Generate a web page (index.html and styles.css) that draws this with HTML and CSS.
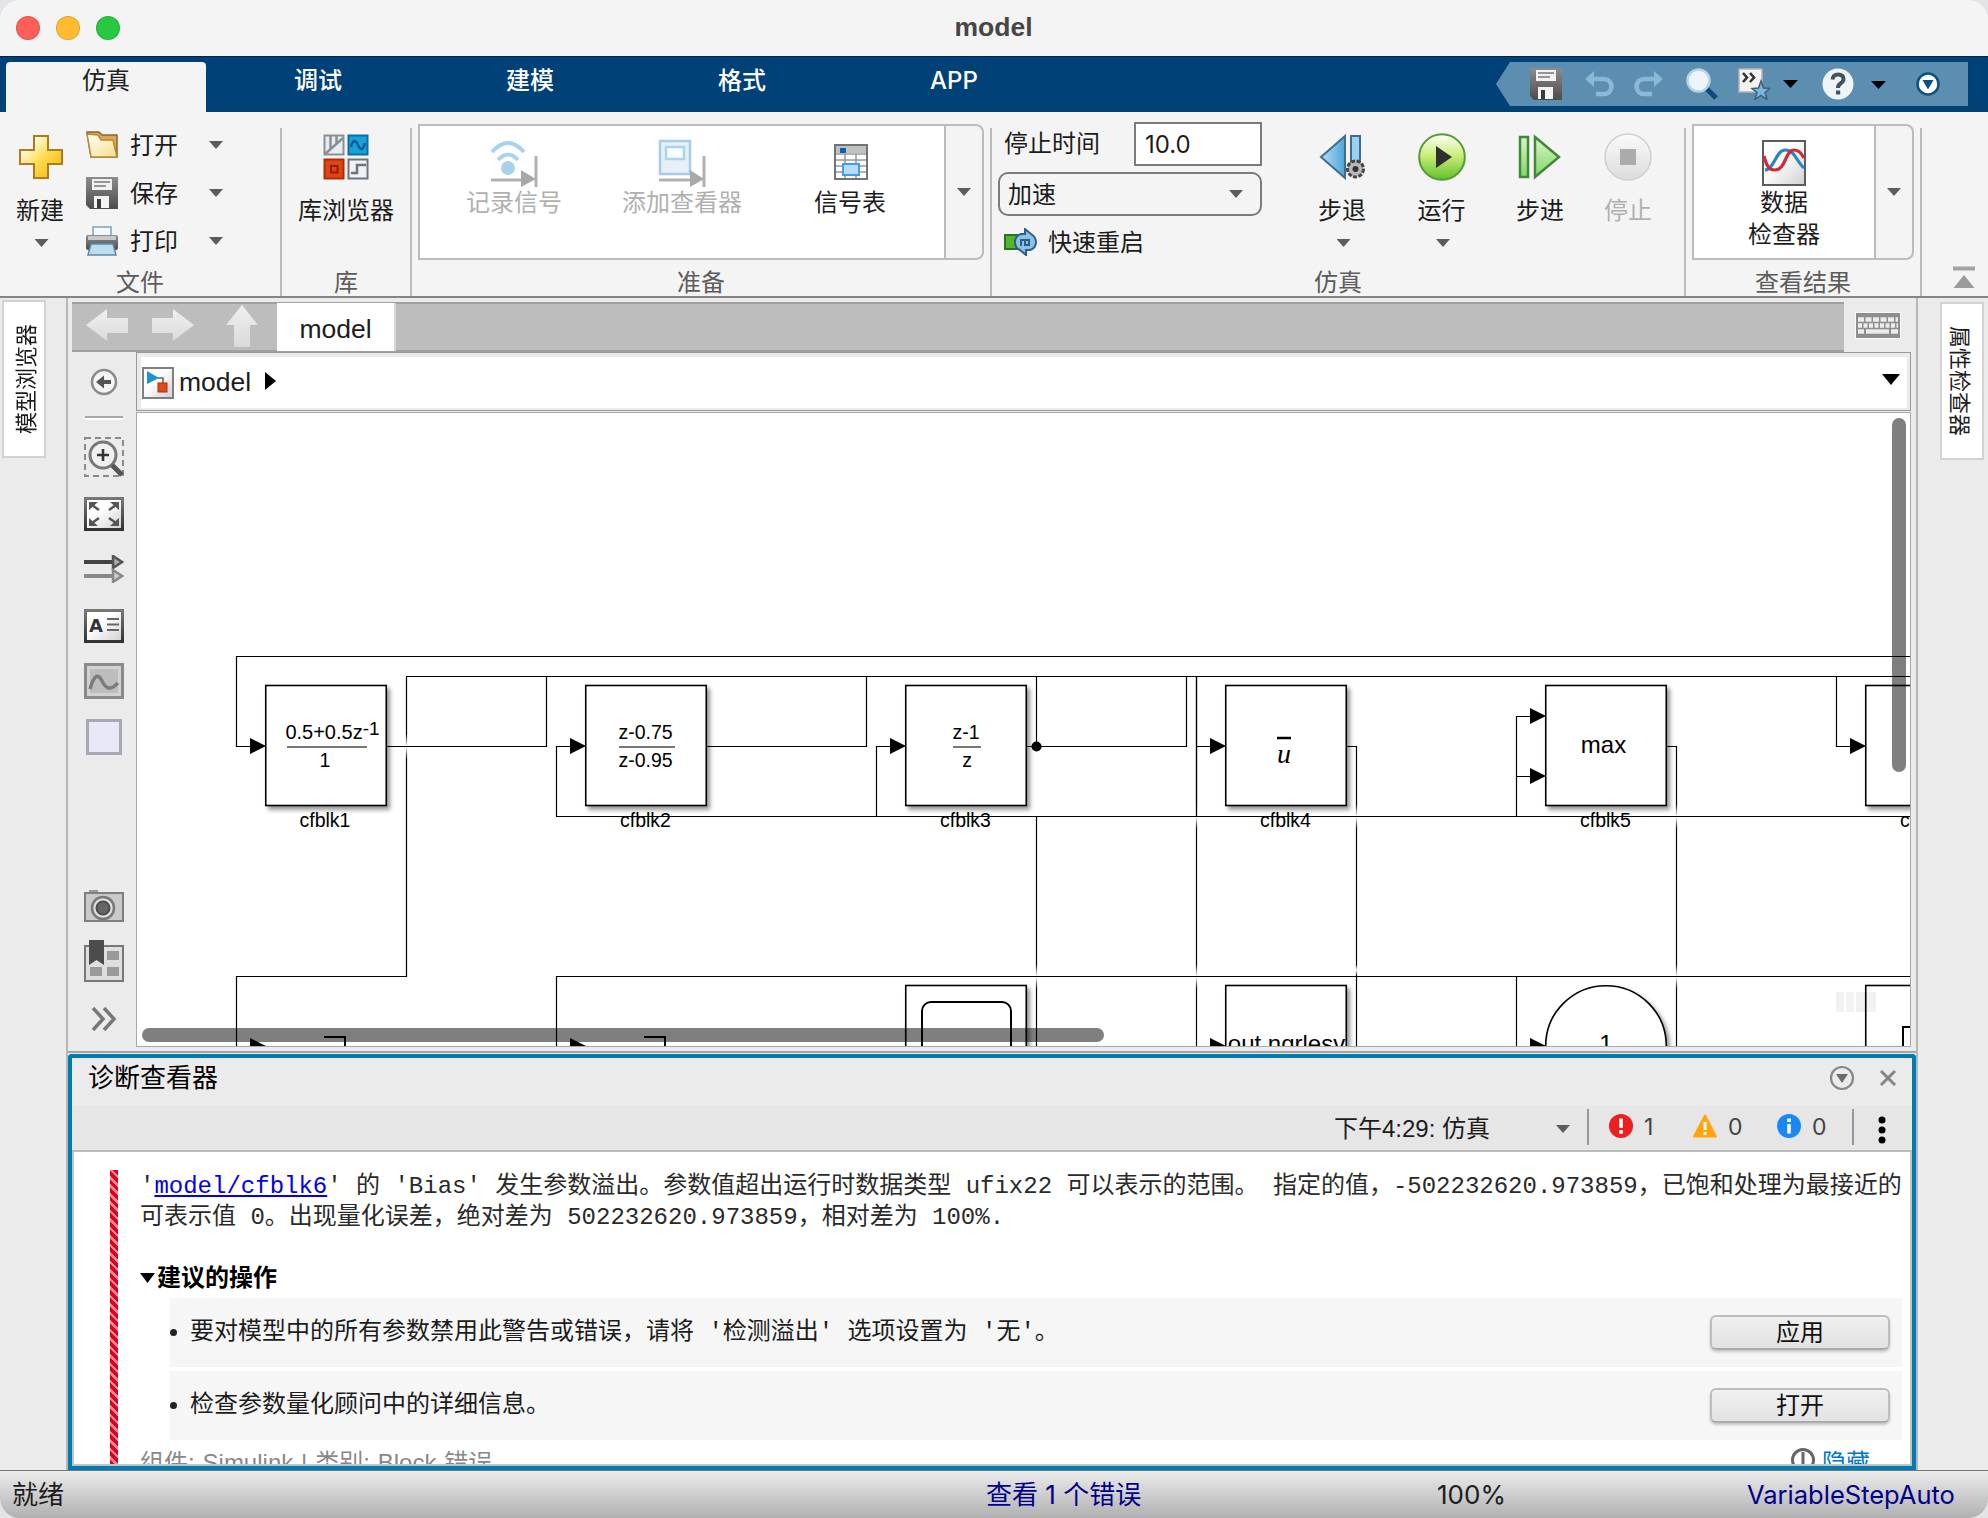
FILE: index.html
```html
<!DOCTYPE html>
<html lang="zh-CN">
<head>
<meta charset="utf-8">
<title>model</title>
<link rel="stylesheet" href="styles.css">
</head>
<body>
<svg class="defs" width="0" height="0" aria-hidden="true">
  <defs>
    <linearGradient id="gold" x1="0" y1="0" x2="1" y2="1"><stop offset=".2" stop-color="#fffbe0"/><stop offset=".55" stop-color="#ffd94a"/><stop offset="1" stop-color="#eeb000"/></linearGradient>
    <linearGradient id="cream" x1="0" y1="0" x2="1" y2="1"><stop offset="0" stop-color="#fffef4"/><stop offset="1" stop-color="#f7df8c"/></linearGradient>
    <linearGradient id="steel" x1="0" y1="0" x2="0" y2="1"><stop offset="0" stop-color="#8c8c8c"/><stop offset="1" stop-color="#4c4c4c"/></linearGradient>
    <linearGradient id="blue" x1="0" y1="0" x2="1" y2="0"><stop offset="0" stop-color="#b4e0f7"/><stop offset="1" stop-color="#4fa5d8"/></linearGradient>
    <linearGradient id="leaf" x1="0" y1="0" x2="0" y2="1"><stop offset="0" stop-color="#d9f5c9"/><stop offset="1" stop-color="#83d665"/></linearGradient>
    <linearGradient id="run" x1="0" y1="0" x2="0" y2="1"><stop offset="0" stop-color="#ffffff"/><stop offset=".45" stop-color="#cdee7c"/><stop offset="1" stop-color="#62bf2b"/></linearGradient>
    <linearGradient id="pale" x1="0" y1="0" x2="0" y2="1"><stop offset="0" stop-color="#fafafa"/><stop offset="1" stop-color="#dcdcdc"/></linearGradient>
    <linearGradient id="paper" x1="0" y1="0" x2="1" y2="1"><stop offset=".4" stop-color="#ffffff"/><stop offset="1" stop-color="#cfcfd2"/></linearGradient>
    <linearGradient id="frame" x1="0" y1="0" x2="0" y2="1"><stop offset="0" stop-color="#777"/><stop offset="1" stop-color="#333"/></linearGradient>
    <linearGradient id="nav" x1="0" y1="0" x2="0" y2="1"><stop offset="0" stop-color="#f0f0f0"/><stop offset="1" stop-color="#dadada"/></linearGradient>
    <symbol id="disk" viewBox="0 0 32 32">
      <path d="M0 0H32V32H4L0 28Z" fill="url(#steel)"/><rect x="6" y="2" width="20" height="11" fill="#f1f1f1"/>
      <path d="M8 5H24M8 9H20" stroke="#777" stroke-width="1.6"/><rect x="8" y="19" width="15" height="12" fill="#f4f4f4"/><rect x="11" y="22" width="4" height="9" fill="#3c3c3c"/>
    </symbol>
  </defs>
</svg>
<div class="window">
  <header class="titlebar">
    <div class="lights"><i class="light red"></i><i class="light amber"></i><i class="light green"></i></div>
    <h1>model</h1>
  </header>

  <nav class="tabs">
    <a class="tab active">仿真</a><a class="tab">调试</a><a class="tab">建模</a><a class="tab">格式</a><a class="tab">APP</a>
    <div class="quick">
      <svg class="q-save" width="32" height="32"><use href="#disk"/></svg>
      <svg class="q-undo" width="30" height="26" viewBox="0 0 30 26"><path d="M6 8H19A7.500 7.500 0 0 1 19 23H11" fill="none" stroke="#8ab8d6" stroke-width="4.500"/><path d="M0 8L9 0V16Z" fill="#8ab8d6"/></svg>
      <svg class="q-redo" width="30" height="26" viewBox="0 0 30 26"><path d="M24 8H11A7.500 7.500 0 0 0 11 23H19" fill="none" stroke="#8ab8d6" stroke-width="4.500"/><path d="M30 8L21 0V16Z" fill="#8ab8d6"/></svg>
      <svg class="q-find" width="32" height="32" viewBox="0 0 32 32"><path d="M20 20L30 30" stroke="#0c4a7c" stroke-width="5"/><circle cx="12.500" cy="12.500" r="11" fill="#eef5fa" stroke="#b4d3e8" stroke-width="2.500"/></svg>
      <svg class="q-fav" width="32" height="32" viewBox="0 0 32 32"><rect x="1" y="1" width="23" height="23" fill="#f2f2f2" stroke="#b9b2ac" stroke-width="1.500"/><path d="M5 5L9 9.500L5 14M12 5L16 9.500L12 14" fill="none" stroke="#333" stroke-width="2.600"/><path d="M23 13L25.500 20L32 20.500L27 24.500L29 31.500L23 27.500L17 31.500L19 24.500L14 20.500L20.500 20Z" fill="#7db5dc" stroke="#3a5f7f" stroke-width="1.500"/></svg>
      <i class="caret black q-c1"></i>
      <svg class="q-help" width="32" height="32" viewBox="0 0 32 32"><circle cx="16" cy="16" r="15.500" fill="#eff4f7"/><path d="M10.500 11.500Q11 6.500 16 6.500Q21.500 6.500 21.500 11Q21.500 13.500 18.500 15.500Q16 17 16 20" fill="none" stroke="#44525f" stroke-width="4"/><rect x="14" y="22.500" width="4.200" height="4" fill="#44525f"/></svg>
      <i class="caret black q-c2"></i>
      <svg class="q-more" width="24" height="24" viewBox="0 0 24 24"><circle cx="12" cy="12" r="10.500" fill="#fff" stroke="#0e5180" stroke-width="2.500"/><path d="M6.500 8H17.500L12 17.500Z" fill="#0e4f85"/></svg>
    </div>
  </nav>

  <div class="toolstrip">
    <section class="group file">
      <div class="content">
        <div class="big new">
          <span class="ico"><svg width="46" height="46" viewBox="0 0 46 46"><path d="M16 2H30V16H44V30H30V44H16V30H2V16H16Z" fill="url(#gold)" stroke="#b27a1c" stroke-width="2"/></svg></span>
          <span class="lbl">新建</span><i class="caret"></i>
        </div>
        <div class="rows">
          <div class="row"><svg width="32" height="28" viewBox="0 0 32 28"><path d="M1 1H13L16 4H31V26H5Z" fill="#d9a95c" stroke="#8f6524" stroke-width="1.500"/><path d="M1 3L12 4L15 9H27L31 26H5Z" fill="url(#cream)" stroke="#b88937" stroke-width="1.500"/></svg><span>打开</span><i class="caret"></i></div>
          <div class="row"><svg width="32" height="32"><use href="#disk"/></svg><span>保存</span><i class="caret"></i></div>
          <div class="row"><svg width="32" height="30" viewBox="0 0 32 30"><rect x="7" y="1" width="18" height="12" fill="#f3f9fd" stroke="#7fa3bd" stroke-width="1.500"/><rect x="0" y="9" width="32" height="15" rx="2" fill="url(#steel)"/><rect x="2" y="10" width="28" height="4" fill="#c9c9c9"/><path d="M5 18H27L30 29H2Z" fill="#bcdcf0" stroke="#5a89aa" stroke-width="1.500"/></svg><span>打印</span><i class="caret"></i></div>
        </div>
      </div>
      <h2>文件</h2>
    </section>
    <i class="sep"></i>
    <section class="group lib">
      <div class="content">
        <div class="big">
          <span class="ico"><svg width="46" height="46" viewBox="0 0 46 46"><rect x="1.500" y="1.500" width="19" height="19" fill="#e8edf0" stroke="#8a8f93" stroke-width="2"/><path d="M7.500 2V14M13.500 2V9M2 20L20 4" stroke="#8a8f93" stroke-width="2.500"/><rect x="25.500" y="1.500" width="19" height="19" fill="#18a0dc" stroke="#0c6fa6" stroke-width="2"/><path d="M28 13Q31 2 35 11T42 9" fill="none" stroke="#0a5c94" stroke-width="2.500"/><rect x="1.500" y="25.500" width="19" height="19" fill="#e24312" stroke="#b02c08" stroke-width="2"/><rect x="8" y="32" width="6.500" height="6.500" fill="none" stroke="#8e2206" stroke-width="2"/><rect x="25.500" y="25.500" width="19" height="19" fill="#eef3f6" stroke="#6f7478" stroke-width="2"/><path d="M28 39H34V31H43" fill="none" stroke="#6f7478" stroke-width="2.500"/></svg></span>
          <span class="lbl">库浏览器</span>
        </div>
      </div>
      <h2>库</h2>
    </section>
    <i class="sep"></i>
    <section class="group prep">
      <div class="content">
        <div class="gallery">
          <div class="items">
            <div class="item off"><span class="ico"><svg width="48" height="48" viewBox="0 0 48 48"><path d="M2 13Q18 -5 34 13M8 21Q18 10 28 21" fill="none" stroke="#a9d2ec" stroke-width="4"/><circle cx="18" cy="29" r="7" fill="#a9d2ec"/><path d="M1 41H32M46 17V48" stroke="#b0b0b0" stroke-width="3"/><path d="M31 31L46 40L31 48Z" fill="#a8a8a8"/></svg></span><span class="lbl">记录信号</span></div>
            <div class="item off"><span class="ico"><svg width="48" height="48" viewBox="0 0 48 48"><rect x="2" y="2" width="30" height="33" fill="#e7f0f8" stroke="#a9cbe5" stroke-width="2.500"/><rect x="8" y="8" width="18" height="12" fill="#f8fcff" stroke="#a9d6ef" stroke-width="2.500"/><path d="M1 41H32M46 17V48" stroke="#b0b0b0" stroke-width="3"/><path d="M32 31L46 40L32 48Z" fill="#a8a8a8"/></svg></span><span class="lbl">添加查看器</span></div>
            <div class="item"><span class="ico"><svg class="table" width="34" height="36" viewBox="0 0 34 36"><rect x="1" y="1" width="32" height="34" fill="#fff" stroke="#737373" stroke-width="2"/><rect x="2" y="2" width="30" height="7" fill="#c2c2c2"/><path d="M2 10H32M2 16H32M2 22H32M2 28H32M11 10V34M22 10V34" stroke="#999" stroke-width="1.600"/><rect x="6" y="4" width="6" height="5" fill="#0a62ae"/><rect x="9" y="20" width="16" height="11" fill="#b8ddfa" stroke="#3d9fee" stroke-width="2"/></svg></span><span class="lbl">信号表</span></div>
          </div>
          <div class="drop"><i class="caret"></i></div>
        </div>
      </div>
      <h2>准备</h2>
    </section>
    <i class="sep"></i>
    <section class="group sim">
      <div class="content">
        <div class="params">
          <div class="param"><span class="name">停止时间</span><span class="field">10.0</span></div>
          <div class="select"><span>加速</span><i class="caret"></i></div>
          <div class="restart"><svg width="33" height="28" viewBox="0 0 33 28"><rect x="1" y="7" width="12" height="14" fill="#57b52c" stroke="#2b7224" stroke-width="2"/><path d="M17 6H21V1L27 6Q32 9 32 14Q32 20 26 22H22V27L16 22Q11 20 11 14Q11 8 17 6Z" fill="#8cc3e4" stroke="#2c6088" stroke-width="2"/><path d="M17 18V12H25V17H21V12" fill="none" stroke="#2c6088" stroke-width="2"/></svg><span>快速重启</span></div>
        </div>
        <div class="big w100"><span class="ico"><svg width="46" height="46" viewBox="0 0 46 46"><path d="M26 2V44L2 23Z" fill="url(#blue)" stroke="#3f6d8d" stroke-width="2"/><rect x="32" y="2" width="9" height="36" fill="#9bd2f2" stroke="#3f6d8d" stroke-width="2"/><circle cx="36.500" cy="35" r="8" fill="#b8b8b8" stroke="#444" stroke-width="3" stroke-dasharray="4 1.500"/><circle cx="36.500" cy="35" r="3" fill="#333"/></svg></span><span class="lbl">步退</span><i class="caret"></i></div>
        <div class="big w99"><span class="ico"><svg width="48" height="48" viewBox="0 0 48 48"><circle cx="24" cy="24" r="22.800" fill="url(#run)" stroke="#4f9f30" stroke-width="2"/><path d="M18 13V35L34 24Z" fill="#2f2f2f"/></svg></span><span class="lbl">运行</span><i class="caret"></i></div>
        <div class="big w98"><span class="ico"><svg class="fwd" width="44" height="46" viewBox="0 0 44 46"><rect x="3" y="3" width="8" height="40" fill="url(#leaf)" stroke="#43883a" stroke-width="2.500"/><path d="M18 3V43L42 23Z" fill="url(#leaf)" stroke="#43883a" stroke-width="2.500"/></svg></span><span class="lbl">步进</span></div>
        <div class="big w78 off"><span class="ico"><svg width="48" height="48" viewBox="0 0 48 48"><circle cx="24" cy="24" r="23" fill="url(#pale)" stroke="#cfcfcf" stroke-width="1.500"/><rect x="16" y="16" width="16" height="16" fill="#ababab"/></svg></span><span class="lbl">停止</span></div>
      </div>
      <h2>仿真</h2>
    </section>
    <i class="sep"></i>
    <section class="group results">
      <div class="content">
        <div class="gallery">
          <div class="items">
            <div class="item"><span class="ico"><svg width="44" height="46" viewBox="0 0 44 46"><rect x="1" y="1" width="42" height="44" fill="url(#paper)" stroke="#5c5c5c" stroke-width="2"/><path d="M3 30C12 30 14 10 23 10C33 10 34 21 42 28" fill="none" stroke="#2c85c4" stroke-width="3.200"/><path d="M2 16C5 27 7 30 13 30C24 30 23 10 32 10C37 10 39 13 42 18" fill="none" stroke="#d22a31" stroke-width="3.200"/></svg></span><span class="lbl two">数据<br>检查器</span></div>
          </div>
          <div class="drop"><i class="caret"></i></div>
        </div>
      </div>
      <h2>查看结果</h2>
    </section>
    <i class="sep"></i>
    <svg class="collapse" width="22" height="24" viewBox="0 0 22 24"><path d="M0 2.500H22" stroke="#a3a3a3" stroke-width="4"/><path d="M11 9L21.500 22H.5Z" fill="#9b9b9b"/></svg>
  </div>

  <main class="main">
    <aside class="side left"><span class="vtab">模型浏览器</span></aside>
    <div class="center">
      <div class="docbar">
        <div class="doctabs">
          <svg class="nav-l" width="42" height="32" viewBox="0 0 42 32"><path d="M0 16L21 0V9H42V24H21V32Z" fill="url(#nav)"/></svg>
          <svg class="nav-r" width="42" height="32" viewBox="0 0 42 32"><path d="M42 16L21 0V9H0V24H21V32Z" fill="url(#nav)"/></svg>
          <svg class="nav-u" width="34" height="42" viewBox="0 0 34 42"><path d="M17 0L33 20H25V42H9V20H1Z" fill="url(#nav)"/></svg>
          <span class="doctab">model</span>
        </div>
        <svg class="keys" width="46" height="27" viewBox="0 0 46 27"><rect x="0" y="0" width="46" height="27" fill="#fafafa"/><rect x="1" y="1" width="44" height="25" fill="#8e8e8e"/><g stroke="#ececec" stroke-width="4.500"><path d="M3 7.500H43" stroke-dasharray="6 1.500"/><path d="M3 13.500H43" stroke-dasharray="4 1.500"/><path d="M3 19.500H9M11 19.500H34M36 19.500H43"/></g></svg>
      </div>
      <div class="work">
        <div class="palette">
          <svg class="p1" width="28" height="28" viewBox="0 0 28 28"><circle cx="14" cy="14" r="12" fill="#f4f4f4" stroke="#8a8a8a" stroke-width="2.500"/><path d="M6 14L14 7.500V12H21V16H14V20.500Z" fill="#555"/></svg>
          <i class="rule"></i>
          <svg class="p2" width="40" height="40" viewBox="0 0 40 40"><rect x="1" y="1" width="38" height="38" fill="none" stroke="#8a8a8a" stroke-width="2" stroke-dasharray="6 4"/><circle cx="19" cy="18" r="13" fill="#f0f0f0" stroke="#777" stroke-width="3"/><path d="M19 12V24M13 18H25" stroke="#333" stroke-width="2.600"/><path d="M28 28L38 38" stroke="#555" stroke-width="5"/></svg>
          <svg class="p3" width="40" height="34" viewBox="0 0 40 34"><rect x="1.500" y="1.500" width="37" height="31" fill="url(#paper)" stroke="url(#frame)" stroke-width="3"/><g fill="#555" stroke="#555" stroke-width="2.500"><path d="M15 13L8 8M25 13L32 8M15 21L8 26M25 21L32 26"/><path stroke="none" d="M5 5H14L5 13ZM35 5H26L35 13ZM5 29H14L5 21ZM35 29H26L35 21Z"/></g></svg>
          <svg class="p4" width="40" height="28" viewBox="0 0 40 28"><path d="M0 7H30" stroke="#444" stroke-width="4"/><path d="M0 21H30" stroke="#888" stroke-width="4"/><path d="M29 1L38 7L29 13Z" fill="#aaa" stroke="#555" stroke-width="2.500"/><path d="M29 15L38 21L29 27Z" fill="#ccc" stroke="#888" stroke-width="2.500"/></svg>
          <svg class="p5" width="40" height="34" viewBox="0 0 40 34"><rect x="1.500" y="1.500" width="37" height="31" fill="url(#paper)" stroke="url(#frame)" stroke-width="3"/><text x="5" y="22.500" class="glyph">A</text><path d="M23 10H35M23 15.500H35M23 21H35" stroke="#666" stroke-width="2"/></svg>
          <svg class="p6" width="40" height="36" viewBox="0 0 40 36"><rect x="1.500" y="1.500" width="37" height="33" fill="#d2d2d2" stroke="#8a8a8a" stroke-width="3"/><rect x="6" y="6" width="28" height="24" fill="#bdbdbd"/><path d="M6 26C10 12 14 10 18 18S26 28 34 20" fill="none" stroke="#7b7b7b" stroke-width="3.500"/></svg>
          <svg class="p7" width="36" height="36" viewBox="0 0 36 36"><rect x="1.500" y="1.500" width="33" height="33" fill="#e8e8f8" stroke="#a9a9b3" stroke-width="3"/></svg>
          <svg class="p8" width="40" height="32" viewBox="0 0 40 32"><rect x="5" y="0" width="9" height="5" fill="#999"/><rect x="1" y="3" width="38" height="28" fill="#c9c9c9" stroke="#7e7e7e" stroke-width="2"/><circle cx="19" cy="18" r="11" fill="#dedede" stroke="#777" stroke-width="2.500"/><circle cx="19" cy="18" r="6.500" fill="#666" stroke="#4c4c4c" stroke-width="2"/></svg>
          <svg class="p9" width="40" height="42" viewBox="0 0 40 42"><rect x="1" y="6" width="38" height="35" fill="#dedede" stroke="#777" stroke-width="2"/><path d="M23 11H35V20H23ZM23 27H35V36H23ZM6 27H18V36H6Z" fill="#999"/><path d="M5 0H20V25L12.500 20L5 25Z" fill="#4c4c4c"/></svg>
          <svg class="p10" width="26" height="24" viewBox="0 0 26 24"><path d="M2 1L12 12L2 23M13 1L23 12L13 23" fill="none" stroke="#777" stroke-width="3.500"/></svg>
        </div>
        <div class="editor">
          <div class="crumbs">
            <svg width="32" height="32" viewBox="0 0 32 32"><rect x="1" y="1" width="30" height="30" fill="url(#paper)" stroke="#7f7f7f" stroke-width="2"/><path d="M5 4V17L17 11Z" fill="#1a94d2"/><path d="M16 11H21V16" fill="none" stroke="#666" stroke-width="1.600"/><rect x="16" y="16" width="9" height="9" fill="#df4a16" stroke="#a92f08" stroke-width="1"/></svg>
            <span>model</span>
            <svg class="next" width="11" height="18" viewBox="0 0 11 18"><path d="M0 0L11 9L0 18Z"/></svg>
            <i class="caret black wide"></i>
          </div>
          <div class="canvas">
            <svg width="1773" height="633" viewBox="137 413 1773 633">
              <defs>
                <filter id="sh" x="-10%" y="-10%" width="130%" height="130%"><feDropShadow dx="3" dy="3.500" stdDeviation="2" flood-opacity=".42"/></filter>
                <linearGradient id="gap" x1="0" y1="0" x2="0" y2="1"><stop offset="0" stop-color="#fff" stop-opacity="0"/><stop offset=".5" stop-color="#fff"/><stop offset="1" stop-color="#fff" stop-opacity="0"/></linearGradient>
              </defs>
              <g class="wire">
                <path d="M406.500 676V976.500H236.500V1050"/>
                <path d="M1036.500 676V746M1036.500 816V1050M1196.500 676V1050M1346 746.500H1356.500V1050M1666 746.500H1676.500V1050"/>
              </g>
              <g fill="url(#gap)">
                <rect x="404" y="734" width="5" height="25"/>
                <rect x="1034" y="964" width="5" height="25"/><rect x="1194" y="804" width="5" height="25"/><rect x="1194" y="964" width="5" height="25"/>
                <rect x="1354" y="804" width="5" height="25"/><rect x="1354" y="964" width="5" height="12"/>
                <rect x="1674" y="804" width="5" height="25"/><rect x="1674" y="964" width="5" height="25"/>
              </g>
              <g class="wire">
                <path d="M1910 656.500H236.500V746.500H252M1910 676.500H406"/>
                <path d="M387 746.500H546.500V676M706 746.500H866.500V676M1026 746.500H1186.500V676"/>
                <path d="M572 746.500H556.500V816.500H1910M892 746.500H876.500V816M1196 746.500H1212M1196.500 676V816"/>
                <path d="M1532 716.500H1516.500V816M1516 776.500H1532M1836.500 676V746.500H1852"/>
                <path d="M1910 976.500H556.500V1050M1516.500 976V1050"/>
              </g>
              <circle cx="1036.500" cy="746.500" r="5"/>
              <g class="block" filter="url(#sh)">
                <rect x="265.750" y="685.500" width="120.500" height="120"/><rect x="585.750" y="685.500" width="120.500" height="120"/><rect x="905.750" y="685.500" width="120.500" height="120"/><rect x="1225.750" y="685.500" width="120.500" height="120"/><rect x="1545.750" y="685.500" width="120.500" height="120"/><rect x="1865.750" y="685.500" width="120.500" height="120"/>
                <rect x="905.750" y="985.500" width="120.500" height="120"/><rect x="1225.750" y="985.500" width="120.500" height="120"/><circle cx="1606" cy="1046" r="60.300"/><rect x="1865.750" y="985.500" width="120.500" height="120"/>
              </g>
              <path d="M250 738V754L266 746ZM570 738V754L586 746ZM890 738V754L906 746ZM1210 738V754L1226 746ZM1530 708V724L1546 716ZM1530 768V784L1546 776ZM1850 738V754L1866 746ZM250 1038V1054L266 1046ZM570 1038V1054L586 1046ZM1210 1038V1054L1226 1046ZM1530 1038V1054L1546 1046Z"/>
              <g fill="none" stroke="#000" stroke-width="2">
                <path d="M324 1037H345V1060M644 1037H665V1060M1903 1060V1027H1915"/><rect x="922" y="1002" width="89" height="80" rx="9"/>
              </g>
              <path d="M287 747H367M619 747H675M953 747H981" stroke="#777" stroke-width="2"/>
              <path d="M1277 738H1291" stroke="#000" stroke-width="2.500"/>
              <g class="t">
                <text x="332.500" y="739" font-size="20"><tspan>0.5+0.5z</tspan><tspan font-size="19" dy="-4">-1</tspan></text><text x="325" y="767">1</text>
                <text x="645.500" y="739">z-0.75</text><text x="645.500" y="767">z-0.95</text>
                <text x="966" y="739">z-1</text><text x="967" y="767">z</text>
                <text x="1284" y="763" class="u">u</text><text x="1603.500" y="753" font-size="24">max</text>
                <text x="325" y="827">cfblk1</text><text x="645.500" y="827">cfblk2</text><text x="965.500" y="827">cfblk3</text><text x="1285.500" y="827">cfblk4</text><text x="1605.500" y="827">cfblk5</text><text x="1925.500" y="827">cfblk6</text>
                <text x="1286.500" y="1052" font-size="24">out.nqrlesv</text><text x="1606" y="1052" font-size="24">1</text>
              </g>
              <path d="M1836 992H1844V1012H1836ZM1846 992H1854V1012H1846ZM1856 992H1876V1012H1856Z" fill="#000" opacity=".05"/>
              <rect x="1892" y="418" width="14" height="354" rx="7" fill="#000" opacity=".5"/>
              <rect x="142" y="1028" width="962" height="14" rx="7" fill="#000" opacity=".5"/>
            </svg>
          </div>
        </div>
      </div>
      <section class="diag">
        <div class="diag-title"><span>诊断查看器</span>
          <svg width="26" height="26" viewBox="0 0 26 26"><circle cx="13" cy="13" r="11" fill="none" stroke="#868686" stroke-width="2.200"/><path d="M7 9H19L13 18Z" fill="#6a6a6a"/></svg>
          <svg class="x" width="18" height="18" viewBox="0 0 18 18"><path d="M2 2L16 16M16 2L2 16" stroke="#858585" stroke-width="3"/></svg>
        </div>
        <div class="diag-bar">
          <span class="when">下午4:29: 仿真</span><i class="caret"></i><i class="bar"></i>
          <svg width="24" height="24" viewBox="0 0 24 24"><circle cx="12" cy="12" r="12" fill="#ee1f1f"/><path d="M12 4.500V14" stroke="#fff" stroke-width="3.600"/><rect x="10.200" y="16" width="3.600" height="3.600" fill="#fff"/></svg><b>1</b>
          <svg class="warn" width="24" height="24" viewBox="0 0 24 24"><path d="M12 1.500L23 22.500H1Z" fill="#ffa60f" stroke="#ffa60f" stroke-width="2" stroke-linejoin="round"/><path d="M12 8V16" stroke="#fff" stroke-width="3"/><rect x="10.500" y="18" width="3" height="3" fill="#fff"/></svg><b>0</b>
          <svg class="info" width="24" height="24" viewBox="0 0 24 24"><circle cx="12" cy="12" r="12" fill="#1987f5"/><rect x="10.200" y="4.500" width="3.600" height="3.600" fill="#fff"/><path d="M12 10V19.500" stroke="#fff" stroke-width="3.600"/></svg><b>0</b>
          <i class="bar b2"></i>
          <svg class="dots" width="8" height="28" viewBox="0 0 8 28"><circle cx="4" cy="4" r="3.500"/><circle cx="4" cy="14" r="3.500"/><circle cx="4" cy="24" r="3.500"/></svg>
        </div>
        <div class="diag-body">
          <i class="stripe"></i>
          <div class="msg">
            <p class="text">'<a>model/cfblk6</a>' 的 'Bias' 发生参数溢出。参数值超出运行时数据类型 ufix22 可以表示的范围。 指定的值，-502232620.973859，已饱和处理为最接近的<br>可表示值 0。出现量化误差，绝对差为 502232620.973859，相对差为 100%.</p>
            <h3><svg width="15" height="10" viewBox="0 0 15 10"><path d="M0 0H15L7.500 10Z"/></svg>建议的操作</h3>
            <div class="act"><i class="dot"></i><span>要对模型中的所有参数禁用此警告或错误，请将 '检测溢出' 选项设置为 '无'。</span><button>应用</button></div>
            <div class="act"><i class="dot"></i><span>检查参数量化顾问中的详细信息。</span><button>打开</button></div>
            <div class="foot"><span>组件: Simulink | 类别: Block 错误</span><svg width="24" height="24" viewBox="0 0 24 24"><circle cx="12" cy="12" r="10.500" fill="#fff" stroke="#666" stroke-width="3"/><path d="M12 4V20" stroke="#666" stroke-width="3"/></svg><a>隐藏</a></div>
          </div>
        </div>
      </section>
    </div>
    <aside class="side right"><span class="vtab">属性检查器</span></aside>
  </main>

  <footer class="status"><span class="s1">就绪</span><span class="s2">查看 1 个错误</span><span class="s3">100%</span><span class="s4">VariableStepAuto</span></footer>
</div>
</body>
</html>
```
FILE: styles.css
```css
* { box-sizing: border-box; }
body { margin: 0; background: #e4e4e8; font-family: Inter, "Noto Sans CJK SC", sans-serif; font-size: 24px; color: #1c1c1c; }
h1, h2, h3, p { margin: 0; font-weight: 400; }
i { display: block; flex: none; }
svg { display: block; flex: none; }
.defs { position: absolute; }
.window { width: 1988px; height: 1518px; display: flex; flex-direction: column; overflow: hidden; border-radius: 20px; background: #ebebeb; }

.titlebar { height: 57px; display: flex; align-items: center; background: #f4f4f4; border-bottom: 1px solid #0a1f4d; }
.lights { width: 300px; padding-left: 16px; display: flex; gap: 16px; }
.light { width: 24px; height: 24px; border-radius: 50%; border: 1px solid rgba(0,0,0,.12); }
.red { background: #ff5f57; }
.amber { background: #febc2e; }
.green { background: #28c840; }
.titlebar h1 { flex: 1; padding: 0 301px 2px 0; text-align: center; font: 700 26.500px/52px "Liberation Sans", Arial, sans-serif; color: #464646; }

.tabs { height: 55px; padding: 5px 0 0 6px; display: flex; gap: 12px; background: #004178; }
.tab { width: 200px; height: 50px; line-height: 38px; text-align: center; color: #fff; font-weight: 500; }
.tab.active { background: #f4f4f4; color: #222; border-radius: 4px 4px 0 0; font-weight: 400; }
.quick { width: 472px; height: 44px; margin-left: 430px; padding-left: 34px; display: flex; align-items: center; background: #5b8eb1; clip-path: polygon(14px 0, 100% 0, 100% 100%, 14px 100%, 0 50%); }
.q-undo { margin-left: 23px; }
.q-redo { margin-left: 18px; }
.q-find { margin-left: 23px; }
.q-fav { margin-left: 20px; }
.q-c1 { margin-left: 13px; }
.q-help { margin-left: 24px; }
.q-c2 { margin: 2px 0 0 17px; }
.q-more { margin-left: 30px; }

.caret { width: 14px; height: 8px; background: #5c5c5c; clip-path: polygon(0 0, 100% 0, 50% 100%); }
.caret.black { width: 15px; background: #000; }
.caret.wide { width: 18px; height: 11px; }

.toolstrip { height: 186px; display: flex; background: #f4f4f4; border-bottom: 2px solid #858585; }
.sep { width: 2px; height: 168px; margin-top: 16px; background: #bcbcbc; }
.group { flex: none; }
.content { height: 154px; display: flex; align-items: flex-start; }
.group h2 { height: 30px; line-height: 33px; text-align: center; font-size: 24px; color: #5c5c5c; }
.file { width: 280px; }
.lib { width: 128px; }
.prep { width: 578px; }
.sim { width: 692px; }
.results { width: 234px; }
.big { width: 128px; padding-top: 21px; display: flex; flex-direction: column; align-items: center; }
.ico { height: 48px; display: flex; align-items: center; }
.big .lbl { margin-top: 15px; line-height: 30px; }
.big .caret { margin: 13px 0 0 3px; }
.new { width: 80px; }
.new .ico { margin-left: 2px; }
.table { margin: -2px 0 0 2px; }
.fwd { margin-left: -3px; }
.off .lbl { color: #b0b0b0; }
.w100 { width: 100px; margin-left: 30px; }
.w99 { width: 99px; }
.w98 { width: 98px; }
.w78 { width: 78px; }
.rows { padding: 9px 0 0 6px; }
.row { height: 48px; display: flex; align-items: center; gap: 12px; }
.row span { margin-top: -4px; }
.row .caret { margin-left: 19px; }
.gallery { flex: 1; height: 136px; margin: 12px 6px 0; display: flex; border: 2px solid #bcbcbc; border-radius: 0 8px 8px 0; }
.items { flex: 1; padding: 0 10px; display: flex; background: #fff; }
.item { flex: 1; padding-top: 13px; display: flex; flex-direction: column; align-items: center; }
.item .lbl { white-space: nowrap; line-height: 32px; }
.item .two { text-align: center; }
.drop { width: 38px; display: flex; align-items: center; justify-content: center; border-left: 2px solid #bcbcbc; }
.params { width: 270px; padding: 10px 0 0 6px; }
.param { height: 44px; display: flex; }
.name { width: 136px; padding-left: 6px; line-height: 43px; }
.field { flex: 1; padding-left: 9px; border: 2px solid #7b7b7b; background: #fff; line-height: 42px; }
.select { height: 44px; margin-top: 6px; padding: 0 17px 0 8px; display: flex; justify-content: space-between; align-items: center; border: 2px solid #7b7b7b; border-radius: 10px; }
.select span { margin-top: -3px; }
.restart { height: 40px; margin-top: 6px; padding-left: 6px; display: flex; align-items: center; gap: 11px; }
.restart span { margin-top: -4px; }
.collapse { align-self: flex-end; margin: 0 0 6px 31px; }

.main { height: 1172px; display: flex; }
.side { flex: none; }
.left { width: 68px; padding: 2px 0 0 2px; border-right: 2px solid #b8b8b8; }
.right { width: 72px; padding: 4px 0 0 22px; border-left: 2px solid #b8b8b8; }
.vtab { width: 44px; height: 158px; display: flex; align-items: center; justify-content: center; writing-mode: vertical-rl; text-orientation: sideways; background: #fff; border: 2px solid #d2d2d2; font-size: 22px; }
.left .vtab { transform: rotate(180deg); }
.center { width: 1848px; display: flex; flex-direction: column; }

.docbar { height: 54px; padding: 4px 0 0 4px; display: flex; }
.doctabs { width: 1772px; height: 50px; padding-left: 14px; display: flex; align-items: flex-start; background: #bdbdbd; border-top: 2px solid #a0a0a0; border-bottom: 2px solid #a0a0a0; }
.nav-l { margin-top: 5px; }
.nav-r { margin: 5px 0 0 24px; }
.nav-u { margin: 1px 0 0 31px; }
.doctab { width: 119px; height: 48px; margin: -1px 0 0 18px; text-align: center; background: #fff; border-right: 2px solid #d8d8d8; font: 26.500px/52px "Liberation Sans", sans-serif; }
.keys { margin: 10px 0 0 11px; }

.work { height: 699px; display: flex; }
.palette { width: 68px; padding-left: 4px; display: flex; flex-direction: column; align-items: center; }
.p1 { margin-top: 16px; }
.rule { width: 38px; height: 4px; margin-top: 20px; background: #a9a9a9; border-bottom: 2px solid #fff; }
.p2 { margin-top: 17px; }
.p3 { margin-top: 20px; }
.p4 { margin-top: 24px; }
.p5 { margin-top: 26px; }
.p6 { margin-top: 20px; }
.p7 { margin-top: 20px; }
.p8 { margin-top: 135px; }
.p9 { margin-top: 18px; }
.p10 { margin-top: 25px; }
.glyph { font: 700 18px "DejaVu Sans", sans-serif; fill: #333; }
.editor { width: 1775px; }
.crumbs { height: 59px; padding: 0 7px 0 1px; display: flex; align-items: center; background: #fff; border: solid #ebebeb; border-width: 5px 4px 3px 5px; outline: 1px solid #999; outline-offset: -1px; font: 26.500px "Liberation Sans", sans-serif; }
.crumbs span { margin-left: 5px; }
.next { margin: -3px 0 0 14px; }
.crumbs .wide { margin-left: auto; margin-top: -6px; }
.canvas { height: 635px; margin-top: 1px; background: #fff; border: 1px solid #a8a8a8; }
.wire path { fill: none; stroke: #000; stroke-width: 1.200; }
.block > * { fill: #fff; stroke: #000; stroke-width: 1.600; }
.t { font-family: "Liberation Sans", Arial, sans-serif; font-size: 19.500px; text-anchor: middle; }
.t .u { font: italic 28px "Liberation Serif", serif; }

.diag { height: 419px; border-top: 2px solid #a3a3a3; padding-top: 1px; display: flex; flex-direction: column; }
.diag-title { height: 52px; padding: 0 15px 9px 16px; display: flex; align-items: center; border: solid #007cb0; border-width: 4px 4px 0; border-radius: 4px 4px 0 0; font-size: 26px; line-height: 36px; color: #000; }
.diag-title span { flex: 1; }
.diag-title .x { margin-left: 24px; }
.diag-bar { height: 46px; padding-left: 1262px; display: flex; align-items: center; border: solid #007cb0; border-width: 0 4px; background: linear-gradient(#e6e6e6 44px, #bababa 44px); }
.when { width: 222px; margin-top: -6px; font-family: "Liberation Sans", "Noto Sans CJK SC", sans-serif; white-space: nowrap; }
.bar { width: 2px; height: 36px; margin: -5px 20px 0 17px; background: #999; }
.diag-bar svg { margin-top: -7px; }
.diag-bar b { width: 28px; margin-top: -5px; padding-left: 11px; font-weight: 400; color: #444; font-size: 23px; }
.diag-bar .warn, .diag-bar .info { margin-left: 32px; }
.diag-bar .b2 { margin: -5px 24px 0 23px; }
.diag-bar .dots { margin-top: 1px; }
.diag-body { flex: 1; display: flex; overflow: hidden; background: #fff; border: 4px solid #007cb0; border-top: 0; box-shadow: inset 2px -2px 0 #c4c4c4, inset -2px 0 0 #c4c4c4; padding: 18px 10px 2px 38px; }
.stripe { width: 8px; height: 294px; background: repeating-linear-gradient(45deg, #df0020 0 3.500px, #f58592 3.500px 6px); }
.msg { width: 1762px; height: 294px; margin-left: 22px; overflow: hidden; }
.text { padding-top: 1px; white-space: nowrap; font-family: "Liberation Mono", "Noto Sans CJK SC", monospace; line-height: 31px; color: #2a2a2a; }
.text a { color: #0000ee; text-decoration: underline; }
.msg h3 { height: 36px; margin-top: 29px; padding-bottom: 4px; line-height: 32px; display: flex; align-items: center; gap: 2px; font-size: 24px; font-weight: 700; color: #000; }
.act { height: 69px; margin: 0 0 4px 30px; padding-right: 12px; display: flex; align-items: center; background: #f6f6f6; font-family: "Liberation Mono", "Noto Sans CJK SC", monospace; white-space: nowrap; }
.dot { width: 7px; height: 7px; border-radius: 50%; background: #222; }
.act span { flex: 1; margin-left: 13px; line-height: 30px; }
.act button { width: 180px; height: 35px; padding: 0; border: 2px solid #bdbdbd; border-bottom-color: #aaa; border-radius: 6px; background: linear-gradient(#f0f0f0, #e2e2e2); box-shadow: 0 2px 3px rgba(0,0,0,.2); font: 24px/30px Inter, "Noto Sans CJK SC", sans-serif; color: #111; }
.foot { display: flex; align-items: flex-start; margin-top: 8px; line-height: 30px; color: #888; font-family: "Liberation Sans", "Noto Sans CJK SC", sans-serif; }
.foot span { width: 1651px; word-spacing: 1.200px; }
.foot a { margin-left: 7px; color: #0076c8; }

.status { height: 48px; flex: none; display: flex; align-items: center; border-top: 1px solid #777; background: linear-gradient(#ececec, #d4d4d4 40%, #b0b0b0); line-height: 46px; white-space: nowrap; font-size: 26px; }
.s1 { width: 974px; padding-left: 12px; }
.s2 { width: 463px; padding-left: 12px; color: #00008b; }
.s3 { width: 310px; }
.s4 { color: #00008b; font-size: 25.500px; }
```
